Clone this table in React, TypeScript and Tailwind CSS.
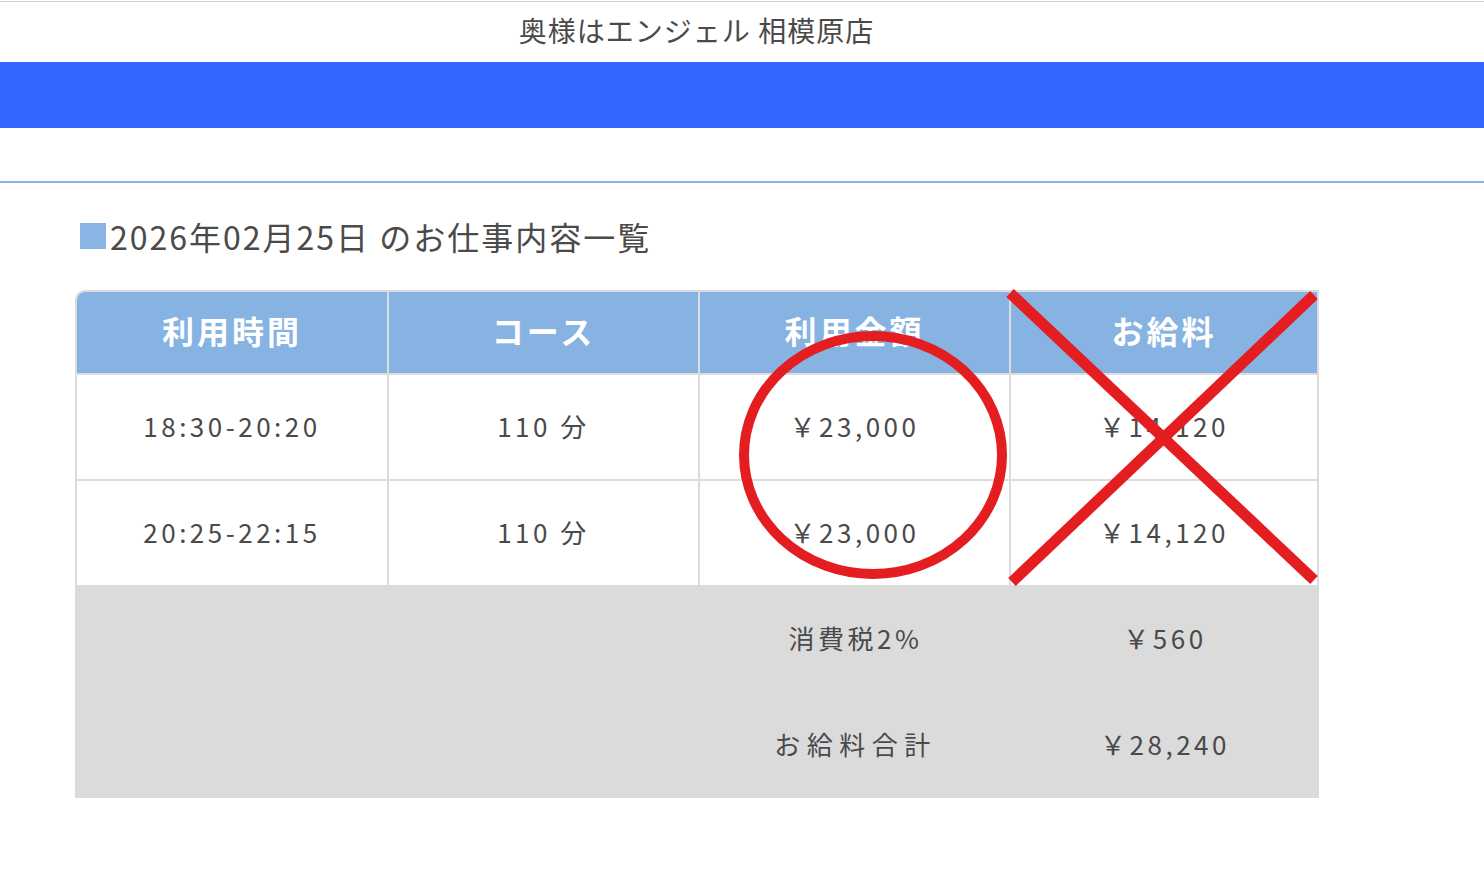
import React from 'react';

const font = { fontFamily: '"Noto Sans CJK JP", "Noto Sans", sans-serif' };

const rows = [
  { time: '18:30-20:20', course: '110 分', price: '￥23,000', pay: '￥14,120' },
  { time: '20:25-22:15', course: '110 分', price: '￥23,000', pay: '￥14,120' },
];

export default function App() {
  return (
    <div className="min-h-[872px] bg-white text-[#4a4a4a]" style={font}>
      {/* top header */}
      <div className="mt-px h-px bg-[#d2d2d2]" />
      <div className="flex h-[60px] w-[1393px] items-center justify-center pb-[4px]">
        <h1 className="text-[28px] leading-none tracking-[1px]">奥様はエンジェル 相模原店</h1>
      </div>
      <div className="h-[66px] bg-[#3366ff]" />
      <div className="h-[53px]" />
      <div className="h-[2px] bg-[#8db4df]" />

      {/* heading */}
      <div className="flex h-[107px] items-center pl-[80px] pb-[2px]">
        <span className="mr-[4px] inline-block h-[26px] w-[26px] bg-[#8ab4e3]" />
        <h2 className="text-[32px] leading-none tracking-[2px]">2026年02月25日 のお仕事内容一覧</h2>
      </div>

      {/* table */}
      <div className="relative ml-[75px] w-[1244px]">
        <div className="overflow-hidden rounded-tl-[10px] border-2 border-b-0 border-[#dcdcdc]">
          <div className="grid h-[81px] grid-cols-[312px_311px_311px_306px] bg-[#87b3e3] text-[32px] font-bold tracking-[3px] text-white">
            <div className="flex items-center justify-center border-r-2 border-[#dcdcdc] pb-[6px]">利用時間</div>
            <div className="flex items-center justify-center border-r-2 border-[#dcdcdc] pb-[6px]">コース</div>
            <div className="flex items-center justify-center border-r-2 border-[#dcdcdc] pb-[6px]">利用金額</div>
            <div className="flex items-center justify-center pb-[6px]">お給料</div>
          </div>
          {rows.map((r, i) => (
            <div
              key={i}
              className="grid h-[106px] grid-cols-[312px_311px_311px_306px] border-t-2 border-[#dcdcdc] text-[26px] tracking-[3.5px]"
            >
              <div className="flex items-center justify-center border-r-2 border-[#dcdcdc] pb-[4px]">{r.time}</div>
              <div className="flex items-center justify-center border-r-2 border-[#dcdcdc] pb-[4px]">{r.course}</div>
              <div className="flex items-center justify-center border-r-2 border-[#dcdcdc] pb-[4px]">{r.price}</div>
              <div className="flex items-center justify-center pb-[4px]">{r.pay}</div>
            </div>
          ))}
        </div>
        <div className="grid h-[213px] grid-cols-[314px_311px_311px_308px] grid-rows-2 bg-[#dbdbdb] text-[26px] tracking-[3.5px]">
          <div />
          <div />
          <div className="flex items-center justify-center pb-[2px]">消費税2%</div>
          <div className="flex items-center justify-center pb-[2px]">￥560</div>
          <div />
          <div />
          <div className="flex items-center justify-center pb-[2px] tracking-[6.5px]">お給料合計</div>
          <div className="flex items-center justify-center pb-[2px]">￥28,240</div>
        </div>

        {/* red marks drawn over the table */}
        <svg className="pointer-events-none absolute left-0 top-0 overflow-visible" width="1244" height="510">
          <ellipse cx="798" cy="165" rx="129" ry="119" fill="none" stroke="#e41d21" strokeWidth="10" />
          <line x1="935" y1="3" x2="1239" y2="290" stroke="#e41d21" strokeWidth="11" />
          <line x1="1239" y1="5" x2="937" y2="292" stroke="#e41d21" strokeWidth="11" />
        </svg>
      </div>
    </div>
  );
}
